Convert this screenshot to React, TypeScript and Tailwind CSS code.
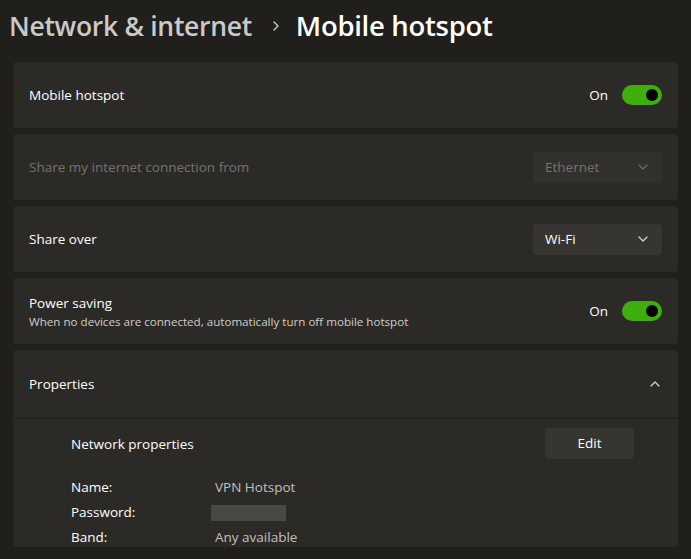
import React from "react"

const font = { fontFamily: '"Segoe UI", "Open Sans", "Noto Sans", sans-serif' }

const Toggle = () => (
    <div className="flex items-center gap-[14px]">
        <span className="text-[13.5px] text-[#ffffff]">On</span>
        <div className="w-[40px] h-[20px] rounded-full bg-[#3dae0e] flex items-center justify-end pr-[4px]">
            <div className="w-[12px] h-[12px] rounded-full bg-black" />
        </div>
    </div>
)

const Chevron = ({ up, dim }: { up?: boolean; dim?: boolean }) => (
    <svg width="10" height="6" viewBox="0 0 10 6" className={up ? "rotate-180" : ""}>
        <path
            d="M1 1 L5 5 L9 1"
            fill="none"
            stroke={dim ? "#6f6d69" : "#d6d6d6"}
            strokeWidth="1.2"
            strokeLinecap="round"
            strokeLinejoin="round"
        />
    </svg>
)

const Dropdown = ({ label, disabled }: { label: string; disabled?: boolean }) => (
    <div
        className={`w-[129px] h-[31px] rounded-[4px] flex items-center justify-between pl-[12px] pr-[14px] text-[13.5px] ${
            disabled ? "bg-[#32302c] text-[#75736f]" : "bg-[#373531] text-white"
        }`}
    >
        <span>{label}</span>
        <Chevron dim={disabled} />
    </div>
)

const Card = ({ children }: { children: React.ReactNode }) => (
    <div className="h-[66px] rounded-[4px] bg-[#2c2a26] flex items-center justify-between pl-[16px] pr-[16px]">
        {children}
    </div>
)

export default function App() {
    return (
        <div className="w-[691px] h-[559px] overflow-hidden bg-[#201f1b] text-white" style={font}>
            {/* Header */}
            <div className="h-[62px] flex items-baseline pt-[5px] pl-[9px] font-semibold tracking-[-0.3px]">
                <span className="text-[26.5px] text-[#c9c9c9]">Network &amp; internet</span>
                <svg width="6" height="10" viewBox="0 0 6 10" className="self-start mt-[16px] ml-[21px] mr-[17px]">
                    <path
                        d="M1 1 L5 5 L1 9"
                        fill="none"
                        stroke="#c9c9c9"
                        strokeWidth="1.4"
                        strokeLinecap="round"
                        strokeLinejoin="round"
                    />
                </svg>
                <span className="text-[27.5px] text-white">Mobile hotspot</span>
            </div>

            <div className="pl-[13px] pr-[13px] flex flex-col gap-[6px]">
                <Card>
                    <span className="text-[13.5px] pt-[1px]">Mobile hotspot</span>
                    <Toggle />
                </Card>
                <Card>
                    <span className="text-[13.5px] text-[#75736f]">Share my internet connection from</span>
                    <Dropdown label="Ethernet" disabled />
                </Card>
                <Card>
                    <span className="text-[13.5px]">Share over</span>
                    <Dropdown label="Wi-Fi" />
                </Card>
                <Card>
                    <div className="flex flex-col pt-[2px]">
                        <span className="text-[13.5px] leading-[19px]">Power saving</span>
                        <span className="text-[11.6px] leading-[17px] text-[#cfcdca]">
                            When no devices are connected, automatically turn off mobile hotspot
                        </span>
                    </div>
                    <Toggle />
                </Card>

                {/* Properties */}
                <div className="rounded-[4px] bg-[#2c2a26]">
                    <div className="h-[68px] flex items-center justify-between pl-[16px] pr-[18px]">
                        <span className="text-[13.5px]">Properties</span>
                        <Chevron up />
                    </div>
                    <div className="h-[1px] bg-[#1f1e1b]" />
                    <div className="pl-[58px] pr-[44px] pt-[9px]">
                        <div className="flex items-center justify-between">
                            <span className="text-[13.5px] pt-[2px]">Network properties</span>
                            <button className="w-[89px] h-[31px] rounded-[4px] bg-[#373531] text-[13.5px] text-white">
                                Edit
                            </button>
                        </div>
                        <div className="mt-[19px] grid grid-cols-[144px_1fr] gap-y-[6px] text-[13.5px] leading-[19px]">
                            <span>Name:</span>
                            <span className="text-[#c2c0bd]">VPN Hotspot</span>
                            <span>Password:</span>
                            <span className="flex items-center">
                                <span className="-ml-[4px] w-[75px] h-[16px] bg-[#4a4844]" />
                            </span>
                            <span>Band:</span>
                            <span className="text-[#c2c0bd]">Any available</span>
                        </div>
                    </div>
                </div>
            </div>
        </div>
    )
}
